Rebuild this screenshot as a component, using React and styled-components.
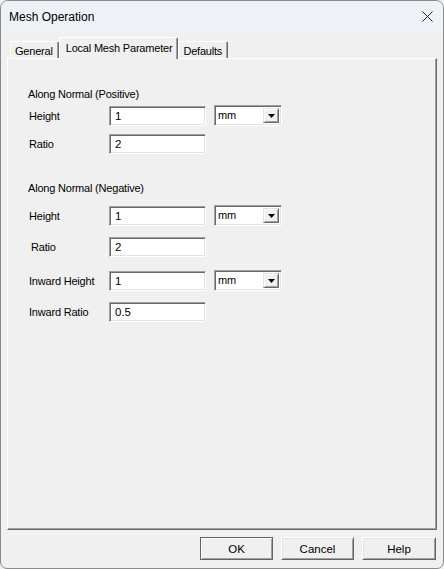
import styled, { createGlobalStyle } from 'styled-components';

const GlobalStyle = createGlobalStyle`
  html, body {
    margin: 0;
    padding: 0;
    background: #f0f0f0;
  }
  * {
    box-sizing: border-box;
  }
`;

// 바깥 창
const Window = styled.div`
  width: 444px;
  height: 569px;
  display: flex;
  flex-direction: column;
  background: #f0f0f0;
  border: 1px solid #8a8a8a;
  border-radius: 8px 8px 7px 7px;
  overflow: hidden;
  font-family: 'Liberation Sans', Arial, sans-serif;
  font-size: 11px;
  letter-spacing: -0.2px;
  color: #000;
`;

const TitleBar = styled.div`
  height: 31px;
  flex: none;
  display: flex;
  align-items: center;
  justify-content: space-between;
  padding: 0 9px 0 8px;
  background: #eef2f7;
  font-size: 12px;
  letter-spacing: 0;
`;

const CloseButton = styled.button`
  width: 14px;
  height: 14px;
  padding: 0;
  border: none;
  background: transparent;
  display: flex;
  align-items: center;
  justify-content: center;
`;

const Body = styled.div`
  flex: 1;
  display: flex;
  flex-direction: column;
  padding: 5px 6px 8px 6px;
`;

const TabStrip = styled.div`
  display: flex;
  align-items: flex-end;
  height: 22px;
  padding-left: 3px;
  margin-bottom: -1px;
  position: relative;
  z-index: 1;
`;

const Tab = styled.div`
  height: ${(p) => (p.$active ? '22px' : '17px')};
  margin-bottom: ${(p) => (p.$active ? '0' : '1px')};
  padding: ${(p) => (p.$active ? '3px 5px 0 6px' : '2px 5px 0 4px')};
  background: #f0f0f0;
  border-top: 1px solid #fff;
  border-left: 1px solid #fff;
  border-right: 1px solid #696969;
  border-radius: 2px 2px 0 0;
  box-shadow: inset -1px 0 0 #a0a0a0;
  line-height: 14px;
  white-space: nowrap;
`;

const Panel = styled.div`
  flex: 1;
  border-top: 1px solid #fff;
  border-left: 1px solid #fff;
  border-right: 1px solid #696969;
  border-bottom: 1px solid #696969;
  box-shadow: inset -1px -1px 0 #a0a0a0;
  padding: 28px 0 0 20px;
`;

const Heading = styled.div`
  height: 14px;
  line-height: 14px;
  margin-top: ${(p) => p.$top || 0}px;
`;

const Row = styled.div`
  display: grid;
  grid-template-columns: 73px 97px 68px;
  column-gap: 8px;
  align-items: center;
  height: 20px;
  margin-top: ${(p) => p.$top || 0}px;
`;

const Label = styled.span`
  padding-left: ${(p) => p.$indent || 1}px;
  white-space: nowrap;
`;

const TextBox = styled.div`
  height: 20px;
  background: #fff;
  border-top: 1px solid #a0a0a0;
  border-left: 1px solid #a0a0a0;
  border-right: 1px solid #fff;
  border-bottom: 1px solid #fff;
  box-shadow: inset 1px 1px 0 #696969, inset -1px -1px 0 #e3e3e3;
  padding: 2px 0 0 5px;
  line-height: 15px;
  font-size: 11.5px;
  letter-spacing: 0;
`;

const Combo = styled.div`
  height: 21px;
  display: flex;
  background: #fff;
  border-top: 1px solid #a0a0a0;
  border-left: 1px solid #a0a0a0;
  border-right: 1px solid #fff;
  border-bottom: 1px solid #fff;
  box-shadow: inset 1px 1px 0 #696969, inset -1px -1px 0 #e3e3e3;
  padding: 2px;
`;

const ComboText = styled.span`
  flex: 1;
  padding-left: 1px;
  line-height: 15px;
`;

const ComboArrow = styled.div`
  width: 16px;
  display: flex;
  align-items: center;
  justify-content: center;
  background: #f0f0f0;
  border-top: 1px solid #e3e3e3;
  border-left: 1px solid #e3e3e3;
  border-right: 1px solid #696969;
  border-bottom: 1px solid #696969;
  box-shadow: inset 1px 1px 0 #fff, inset -1px -1px 0 #a0a0a0;
`;

const ButtonRow = styled.div`
  display: flex;
  justify-content: flex-end;
  gap: 8px;
  margin-top: 7px;
  padding-right: 1px;
`;

const DialogButton = styled.button`
  width: ${(p) => (p.$wide ? 74 : 73)}px;
  height: 23px;
  padding: 0;
  font-family: 'Liberation Sans', Arial, sans-serif;
  font-size: 11.5px;
  color: #000;
  background: #f0f0f0;
  border-top: 1px solid ${(p) => (p.$default ? '#646464' : '#fff')};
  border-left: 1px solid ${(p) => (p.$default ? '#646464' : '#fff')};
  border-right: 1px solid #646464;
  border-bottom: 1px solid #646464;
  box-shadow: ${(p) =>
    p.$default
      ? 'inset 1px 1px 0 #fff, inset -1px -1px 0 #a0a0a0'
      : 'inset 1px 1px 0 #e3e3e3, inset -1px -1px 0 #a0a0a0'};
`;

function Field({ label, value, unit, indent }) {
  return (
    <>
      <Label $indent={indent}>{label}</Label>
      <TextBox>{value}</TextBox>
      {unit ? (
        <Combo>
          <ComboText>{unit}</ComboText>
          <ComboArrow>
            <svg width='7' height='4' viewBox='0 0 7 4'>
              <path d='M0 0h7L3.5 4z' fill='#000' />
            </svg>
          </ComboArrow>
        </Combo>
      ) : (
        <span />
      )}
    </>
  );
}

export default function App() {
  return (
    <>
      <GlobalStyle />
      <Window>
        <TitleBar>
          <span>Mesh Operation</span>
          <CloseButton>
            <svg width='11' height='11' viewBox='0 0 11 11'>
              <path d='M0.5 0.5L10.5 10.5M10.5 0.5L0.5 10.5' stroke='#222' strokeWidth='1' />
            </svg>
          </CloseButton>
        </TitleBar>
        <Body>
          <TabStrip>
            <Tab>General</Tab>
            <Tab $active>Local Mesh Parameter</Tab>
            <Tab>Defaults</Tab>
          </TabStrip>
          <Panel>
            <Heading>Along Normal (Positive)</Heading>
            <Row $top={4}>
              <Field label='Height' value='1' unit='mm' />
            </Row>
            <Row $top={9}>
              <Field label='Ratio' value='2' />
            </Row>

            <Heading $top={27}>Along Normal (Negative)</Heading>
            <Row $top={10}>
              <Field label='Height' value='1' unit='mm' />
            </Row>
            <Row $top={12}>
              <Field label='Ratio' value='2' indent={3} />
            </Row>
            <Row $top={13}>
              <Field label='Inward Height' value='1' unit='mm' />
            </Row>
            <Row $top={12}>
              <Field label='Inward Ratio' value='0.5' />
            </Row>
          </Panel>
          <ButtonRow>
            <DialogButton $default>OK</DialogButton>
            <DialogButton>Cancel</DialogButton>
            <DialogButton $wide>Help</DialogButton>
          </ButtonRow>
        </Body>
      </Window>
    </>
  );
}
